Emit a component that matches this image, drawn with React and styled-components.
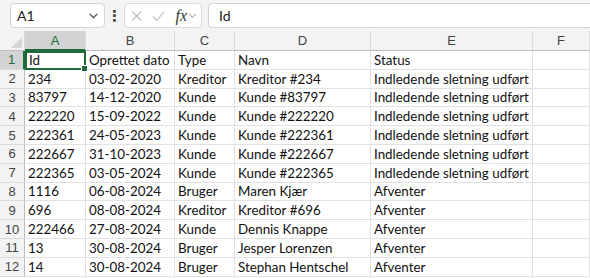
import { Fragment } from 'react';
import styled, { createGlobalStyle } from 'styled-components';

const GlobalStyle = createGlobalStyle`
  body {
    margin: 0;
    background: #ffffff;
    font-family: "Lato", "Liberation Sans", sans-serif;
    overflow: hidden;
  }
`

const Page = styled.div`
  width: 590px;
  height: 278px;
  overflow: hidden;
  background: #fff;
`

const Toolbar = styled.div`
  display: flex;
  align-items: center;
  height: 31px;
  padding: 0 0 0 10px;
  background: #f4f4f4;
  box-sizing: border-box;
`

const NameBox = styled.div`
  display: flex;
  align-items: center;
  justify-content: space-between;
  width: 95px;
  height: 25px;
  box-sizing: border-box;
  padding: 0 5px 0 6px;
  background: #fff;
  border: 1px solid #d4d4d4;
  border-radius: 4px;
  font-size: 14px;
  color: #222;
`

const Dots = styled.div`
  width: 19px;
  text-align: center;
  color: #444;
  font-size: 15px;
  font-weight: bold;
  font-family: "DejaVu Sans", sans-serif;
`

const FormulaButtons = styled.div`
  display: flex;
  align-items: center;
  gap: 8px;
  width: 78px;
  height: 25px;
  box-sizing: border-box;
  padding: 0 4px 0 5px;
  background: #fff;
  border: 1px solid #d9d9d9;
  border-radius: 4px;
`

const FxGroup = styled.div`
  display: flex;
  align-items: center;
  gap: 1px;
`

const Fx = styled.span`
  font-family: "Liberation Serif", serif;
  font-style: italic;
  font-size: 16px;
  color: #333;
  margin-left: 1px;
`

const FormulaInput = styled.div`
  flex: 1;
  margin-left: 6px;
  height: 25px;
  box-sizing: border-box;
  display: flex;
  align-items: center;
  padding-left: 10px;
  background: #fff;
  border: 1px solid #d4d4d4;
  border-right: none;
  border-radius: 4px 0 0 4px;
  font-size: 14px;
  color: #222;
`

const Grid = styled.div`
  display: grid;
  grid-template-columns: 25px 61px 89px 60px 136px 162px 1fr;
  grid-auto-rows: 18.8px;
  grid-template-rows: 20px;
`

const Corner = styled.div`
  position: relative;
  background: #f3f3f3;
  border-bottom: 1px solid #bdbdbd;
  border-right: 1px solid #dadada;
  box-sizing: border-box;
  &::after {
    content: '';
    position: absolute;
    right: 2px;
    bottom: 2px;
    width: 0;
    height: 0;
    border-left: 11px solid transparent;
    border-bottom: 11px solid #d6d6d6;
  }
`

const ColHead = styled.div`
  display: flex;
  align-items: center;
  justify-content: center;
  box-sizing: border-box;
  font-size: 13px;
  font-family: "Liberation Sans", sans-serif;
  background: ${p => (p.$active ? '#d3d3d3' : '#f3f3f3')};
  color: ${p => (p.$active ? '#1d6a3b' : '#444')};
  border-right: 1px solid #dadada;
  border-bottom: ${p => (p.$active ? '2px solid #1d6a3b' : '1px solid #bdbdbd')};
`

const RowHead = styled.div`
  display: flex;
  align-items: center;
  justify-content: center;
  box-sizing: border-box;
  font-size: 13px;
  font-family: "Liberation Sans", sans-serif;
  background: ${p => (p.$active ? '#d3d3d3' : '#f3f3f3')};
  color: ${p => (p.$active ? '#1d6a3b' : '#444')};
  border-bottom: 1px solid #dadada;
  border-right: ${p => (p.$active ? '2px solid #1d6a3b' : '1px solid #bdbdbd')};
`

const Cell = styled.div`
  position: relative;
  display: flex;
  align-items: center;
  box-sizing: border-box;
  padding-left: 3px;
  white-space: nowrap;
  overflow: visible;
  font-size: 13.4px;
  color: #111;
  border-right: 1px solid #e1e1e1;
  border-bottom: 1px solid #e1e1e1;
  ${p => p.$selected && `
    border: 2px solid #1d6a3b;
    padding-left: 2px;
    &::after {
      content: '';
      position: absolute;
      right: -4px;
      bottom: -4px;
      width: 5px;
      height: 5px;
      background: #1d6a3b;
      border: 1px solid #fff;
      z-index: 2;
    }
  `}
`

const Chevron = ({ size = 10, color = '#555' }) => (
  <svg width={size} height={size} viewBox="0 0 10 10">
    <path d="M1.5 3.5 L5 7 L8.5 3.5" fill="none" stroke={color} strokeWidth="1.1" />
  </svg>
)

const rows = [
  ['Id', 'Oprettet dato', 'Type', 'Navn', 'Status'],
  ['234', '03-02-2020', 'Kreditor', 'Kreditor #234', 'Indledende sletning udført'],
  ['83797', '14-12-2020', 'Kunde', 'Kunde #83797', 'Indledende sletning udført'],
  ['222220', '15-09-2022', 'Kunde', 'Kunde #222220', 'Indledende sletning udført'],
  ['222361', '24-05-2023', 'Kunde', 'Kunde #222361', 'Indledende sletning udført'],
  ['222667', '31-10-2023', 'Kunde', 'Kunde #222667', 'Indledende sletning udført'],
  ['222365', '03-05-2024', 'Kunde', 'Kunde #222365', 'Indledende sletning udført'],
  ['1116', '06-08-2024', 'Bruger', 'Maren Kjær', 'Afventer'],
  ['696', '08-08-2024', 'Kreditor', 'Kreditor #696', 'Afventer'],
  ['222466', '27-08-2024', 'Kunde', 'Dennis Knappe', 'Afventer'],
  ['13', '30-08-2024', 'Bruger', 'Jesper Lorenzen', 'Afventer'],
  ['14', '30-08-2024', 'Bruger', 'Stephan Hentschel', 'Afventer'],
]

const cols = ['A', 'B', 'C', 'D', 'E', 'F']

export default function App() {
  return (
    <Page>
      <GlobalStyle />
      <Toolbar>
        <NameBox>
          <span>A1</span>
          <Chevron size={11} color="#444" />
        </NameBox>
        <Dots>⋮</Dots>
        <FormulaButtons>
          <svg width="14" height="14" viewBox="0 0 14 14">
            <path d="M2 2 L12 12 M12 2 L2 12" stroke="#b5b5b5" strokeWidth="1.1" fill="none" />
          </svg>
          <svg width="16" height="14" viewBox="0 0 16 14">
            <path d="M2 7.5 L6 11.5 L14 2.5" stroke="#b5b5b5" strokeWidth="1.1" fill="none" />
          </svg>
          <FxGroup>
            <Fx>fx</Fx>
            <Chevron size={9} color="#888" />
          </FxGroup>
        </FormulaButtons>
        <FormulaInput>Id</FormulaInput>
      </Toolbar>
      <Grid>
        <Corner />
        {cols.map(c => (
          <ColHead key={c} $active={c === 'A'}>{c}</ColHead>
        ))}
        {rows.map((r, i) => (
          <Fragment key={i}>
            <RowHead $active={i === 0}>{i + 1}</RowHead>
            {r.map((v, j) => (
              <Cell key={j} $selected={i === 0 && j === 0}>{v}</Cell>
            ))}
            <Cell />
          </Fragment>
        ))}
      </Grid>
    </Page>
  )
}
